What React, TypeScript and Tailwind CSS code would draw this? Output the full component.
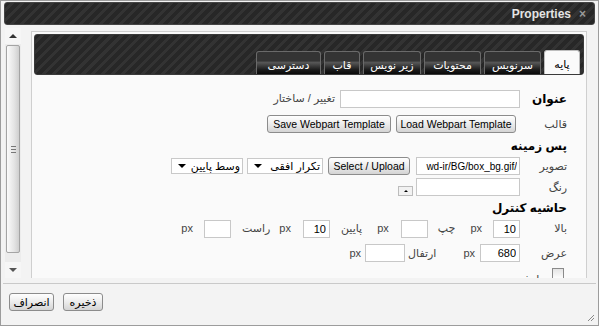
import React from "react";

const stripes =
  "bg-[repeating-linear-gradient(135deg,#272727_0px,#272727_4px,#333333_4px,#333333_7px)]";

function Btn({ children, className = "" }: { children: React.ReactNode; className?: string }) {
  return (
    <button
      className={`h-[18px] shrink-0 rounded-[3px] border border-[#8c8c8c] bg-[linear-gradient(#ffffff,#ececec_50%,#d4d4d4)] leading-none text-black ${className}`}
    >
      {children}
    </button>
  );
}

function Field({ className = "", value = "" }: { className?: string; value?: string }) {
  return (
    <input
      readOnly
      value={value}
      dir="ltr"
      className={`h-[18px] shrink-0 border border-[#c8c8c8] bg-white text-right text-black outline-none ${className}`}
    />
  );
}

function Select({ label, className = "" }: { label: string; className?: string }) {
  return (
    <div
      className={`flex h-[16px] shrink-0 items-center justify-between border border-[#c9c9c9] bg-white pr-[2px] pl-[6px] text-[11px] text-black ${className}`}
    >
      <span>{label}</span>
      <span className="h-0 w-0 border-x-[4px] border-t-[4px] border-x-transparent border-t-black" />
    </div>
  );
}

function Row({
  label,
  bold = false,
  className = "",
  children,
}: {
  label?: React.ReactNode;
  bold?: boolean;
  className?: string;
  children?: React.ReactNode;
}) {
  return (
    <div className={`flex items-center pr-[17px] ${className}`}>
      <div
        className={`shrink-0 whitespace-nowrap ${bold ? "w-[80px] text-[12px] font-bold text-black" : "w-[47px] text-[11px] text-[#444]"}`}
      >
        {label}
      </div>
      {children}
    </div>
  );
}

function Unit({ className = "" }: { className?: string }) {
  return <span className={`shrink-0 text-[11px] text-[#444] ${className}`}>px</span>;
}

function Lbl({ children, className = "" }: { children: React.ReactNode; className?: string }) {
  return <span className={`shrink-0 text-[11px] text-[#444] ${className}`}>{children}</span>;
}

export default function App() {
  const tabs = [
    { label: "پایه", w: "w-[36px]", active: true },
    { label: "سرنویس", w: "w-[57px]" },
    { label: "محتویات", w: "w-[57px]" },
    { label: "زیر نویس", w: "w-[58px]" },
    { label: "قاب", w: "w-[36px]" },
    { label: "دسترسی", w: "w-[65px]" },
  ];

  return (
    <div className="relative flex h-[326px] w-[599px] flex-col overflow-hidden border border-[#9c9c9c] bg-[#f3f3f3] font-['Liberation_Sans','DejaVu_Sans',sans-serif]">
      {/* Title bar */}
      <div
        className={`mx-[3px] mt-[1px] flex h-[23px] shrink-0 items-center justify-end gap-[8px] rounded-[3px] border border-[#444] pr-[8px] ${stripes}`}
      >
        <span className="text-[12px] font-bold text-[#e4e4e4]">Properties</span>
        <span className="text-[12px] font-bold text-[#9a9a9a]">×</span>
      </div>

      {/* Body */}
      <div className="mt-[3px] mr-[11px] ml-[4px] flex h-[250px] shrink-0">
        {/* Scrollbar */}
        <div className="flex h-full w-[16px] shrink-0 flex-col bg-[#ececec]">
          <div className="flex h-[16px] items-center justify-center bg-[#f6f6f6]">
            <span className="h-0 w-0 border-x-[4px] border-b-[4px] border-x-transparent border-b-[#333]" />
          </div>
          <div className="mx-[1px] mt-[1px] flex h-[208px] items-center justify-center rounded-[2px] border border-[#a4a4a4] bg-[linear-gradient(to_right,#fbfbfb,#e4e4e4_60%,#cfcfcf)]">
            <div className="flex flex-col gap-[2px]">
              <span className="h-px w-[5px] bg-[#777]" />
              <span className="h-px w-[5px] bg-[#777]" />
              <span className="h-px w-[5px] bg-[#777]" />
            </div>
          </div>
          <div className="flex-1" />
          <div className="flex h-[16px] items-center justify-center bg-[#f6f6f6]">
            <span className="h-0 w-0 border-x-[4px] border-t-[4px] border-x-transparent border-t-[#555]" />
          </div>
        </div>

        {/* Scroll content */}
        <div className="flex-1 overflow-hidden pt-[3px] pl-[10px]">
          <div dir="rtl" className="h-[300px] border border-[#cfcfcf] bg-[#fafafa] p-[2px]">
            {/* Tabs */}
            <div
              className={`flex h-[41px] items-end gap-[3px] rounded-[3px] border border-[#3a3a3a] pr-[3px] ${stripes}`}
            >
              {tabs.map((t) =>
                t.active ? (
                  <div
                    key={t.label}
                    className={`${t.w} flex h-[24px] items-center justify-center rounded-t-[3px] border border-b-0 border-[#bdbdbd] bg-[#fafafa] pt-[3px] text-[11px] text-black`}
                  >
                    {t.label}
                  </div>
                ) : (
                  <div
                    key={t.label}
                    className={`${t.w} flex h-[23px] items-center justify-center rounded-t-[3px] border border-b-0 border-[#6a6a6a] bg-[linear-gradient(#343434_0%,#343434_40%,#575757_48%,#1c1c1c_80%,#0a0a0a_100%)] pt-[4px] text-[11px] text-white`}
                  >
                    {t.label}
                  </div>
                ),
              )}
            </div>

            {/* Form */}
            <div className="mt-[11px] flex flex-col">
              <Row label="عنوان" bold className="h-[25px] [&>div:first-child]:w-[47px]">
                <Field className="w-[180px]" />
                <Lbl className="mr-[5px]">تغییر / ساختار</Lbl>
              </Row>

              <Row label="قالب" className="h-[26px]">
                <Btn className="mr-[4px] w-[120px] text-[10.5px]">Load Webpart Template</Btn>
                <Btn className="mr-[5px] w-[124px] text-[10.5px]">Save Webpart Template</Btn>
              </Row>

              <Row label="پس زمینه" bold className="h-[18px]" />

              <Row label="تصویر" className="h-[22px]">
                <Field className="w-[104px] pr-[2px] text-[10px]" value="wd-ir/BG/box_bg.gif/" />
                <Btn className="mr-[6px] w-[82px] text-[10.5px]">Select / Upload</Btn>
                <Select label="تکرار افقی" className="mr-[5px] w-[76px]" />
                <Select label="وسط پایین" className="mr-[4px] w-[72px]" />
              </Row>

              <Row label="رنگ" className="h-[20px]">
                <Field className="h-[17px] w-[104px]" />
                <div className="mt-[8px] mr-[3px] flex h-[10px] w-[15px] items-center justify-center border border-[#bcbcbc] bg-[#f2f2f2]">
                  <span className="h-0 w-0 border-x-[2px] border-b-[2px] border-x-transparent border-b-black" />
                </div>
              </Row>

              <Row label="حاشیه کنترل" bold className="h-[22px]" />

              <Row label="بالا" className="h-[19px]">
                <Field className="w-[27px] pr-[3px] text-[11px]" value="10" />
                <Unit className="mr-[11px]" />
                <Lbl className="mr-[15px]">چپ</Lbl>
                <Field className="mr-[10px] w-[27px]" />
                <Unit className="mr-[12px]" />
                <Lbl className="mr-[15px]">پایین</Lbl>
                <Field className="mr-[11px] w-[27px] pr-[3px] text-[11px]" value="10" />
                <Unit className="mr-[12px]" />
                <Lbl className="mr-[9px]">راست</Lbl>
                <Field className="mr-[11px] w-[27px]" />
                <Unit className="mr-[11px]" />
              </Row>

              <Row label="عرض" className="h-[30px]">
                <Field className="w-[40px] pr-[3px] text-[11px]" value="680" />
                <Unit className="mr-[5px]" />
                <Lbl className="mr-[27px]">ارتفال</Lbl>
                <Field className="mr-[3px] w-[40px]" />
                <Unit className="mr-[4px]" />
              </Row>

              <div className="flex h-[24px] items-start pr-[20px]">
                <span className="h-[12px] w-[12px] shrink-0 border border-[#8a8a8a] bg-[linear-gradient(#e4e4e4,#ffffff)]" />
                <span className="mt-[3px] mr-[3px] text-[11px] text-[#444]">نمایش</span>
              </div>
            </div>
          </div>
        </div>
      </div>

      {/* Footer */}
      <div className="mx-[2px] mt-[5px] border-t border-[#c9c9c9]" />
      <div className="flex gap-[9px] pt-[9px] pl-[8px]">
        <Btn className="w-[45px] text-[11px]">انصراف</Btn>
        <Btn className="w-[40px] text-[11px]">ذخیره</Btn>
      </div>

      <svg className="absolute right-[3px] bottom-[3px]" width="8" height="8" viewBox="0 0 8 8">
        <path d="M7 1L1 7M7 4L4 7" stroke="#888" strokeWidth="1" />
      </svg>
    </div>
  );
}
